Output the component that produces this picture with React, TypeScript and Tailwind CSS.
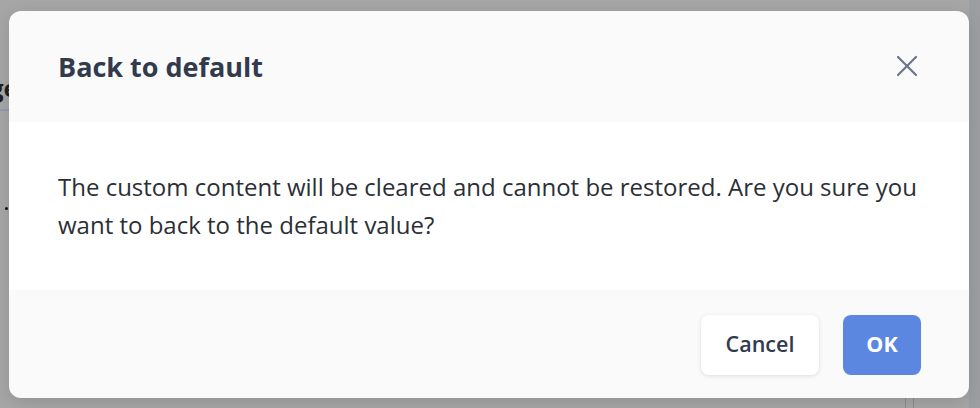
import { X } from "lucide-react";

export default function App() {
  return (
    <div className="relative h-[408px] w-[980px] overflow-hidden bg-[#a6a6a6] font-['Open_Sans',sans-serif]">
      {/* page behind the overlay */}
      <div className="absolute left-[-10px] top-[76px] text-[24px] font-bold leading-none text-[#1f1f1f]">ge</div>
      <div className="absolute left-0 top-[109px] h-[2px] w-[12px] bg-[#8f99a8]" />
      <div className="absolute left-[5px] top-[207px] h-[3px] w-[3px] rounded-full bg-[#111]" />
      <div className="absolute right-0 top-0 h-full w-[11px] bg-[#9c9ea2]" />
      <div className="absolute left-[905px] top-[398px] h-[10px] w-px bg-[#8a8d92]" />
      <div className="absolute left-[913px] top-[398px] h-[10px] w-px bg-[#8a8d92]" />

      <div className="absolute left-[9px] top-[11px] flex h-[387px] w-[960px] flex-col overflow-hidden rounded-[12px] bg-[#fafafa] shadow-[0_4px_16px_rgba(0,0,0,0.12)]">
        <div className="flex h-[111px] items-center justify-between pl-[49px] pr-[44px] pb-[1px]">
          <h2 className="text-[27px] font-bold leading-none text-[#323a4d]">Back to default</h2>
          <button className="flex h-[36px] w-[36px] items-center justify-center text-[#6b7587]">
            <X size={52} strokeWidth={1.45} />
          </button>
        </div>
        <div className="flex h-[168px] items-center bg-white pl-[49px] pr-[40px]">
          <p className="text-[24px] leading-[38px] text-[#2b2f36]">
            The custom content will be cleared and cannot be restored. Are you sure you want to back to the default value?
          </p>
        </div>
        <div className="flex flex-1 items-center justify-end gap-[24px] pr-[48px] pt-[1px]">
          <button className="h-[60px] w-[118px] rounded-[8px] bg-white text-[21.5px] font-semibold text-[#323a4d] shadow-[0_1px_4px_rgba(0,0,0,0.12)]">
            Cancel
          </button>
          <button className="h-[60px] w-[78px] rounded-[8px] bg-[#5b87e0] text-[21.5px] font-bold text-white">
            OK
          </button>
        </div>
      </div>
    </div>
  );
}
